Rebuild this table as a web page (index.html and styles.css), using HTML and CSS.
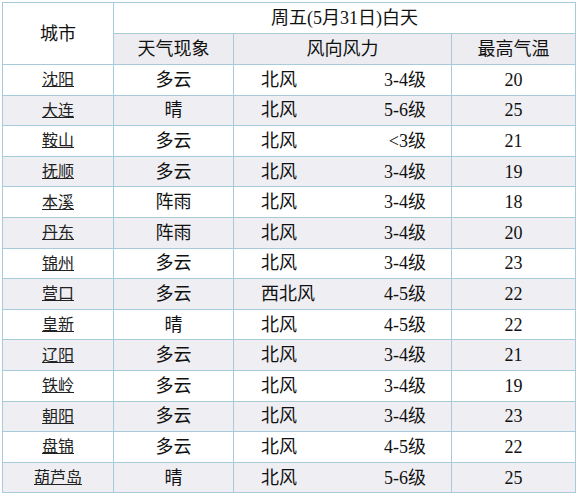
FILE: index.html
```html
<!DOCTYPE html>
<html>
<head>
<meta charset="utf-8">
<link rel="stylesheet" href="styles.css">
</head>
<body>
<table class="wx">
  <colgroup>
    <col class="c1"><col class="c2"><col class="c3"><col class="c4">
  </colgroup>
  <thead>
    <tr class="h1">
      <th rowspan="2" class="city-h">城市</th>
      <th colspan="3">周五(5月31日)白天</th>
    </tr>
    <tr class="h2">
      <th>天气现象</th>
      <th>风向风力</th>
      <th>最高气温</th>
    </tr>
  </thead>
  <tbody>
    <tr><td><a href="#">沈阳</a></td><td>多云</td><td><div class="wind"><span>北风</span><span>3-4级</span></div></td><td>20</td></tr>
    <tr><td><a href="#">大连</a></td><td>晴</td><td><div class="wind"><span>北风</span><span>5-6级</span></div></td><td>25</td></tr>
    <tr><td><a href="#">鞍山</a></td><td>多云</td><td><div class="wind"><span>北风</span><span>&lt;3级</span></div></td><td>21</td></tr>
    <tr><td><a href="#">抚顺</a></td><td>多云</td><td><div class="wind"><span>北风</span><span>3-4级</span></div></td><td>19</td></tr>
    <tr><td><a href="#">本溪</a></td><td>阵雨</td><td><div class="wind"><span>北风</span><span>3-4级</span></div></td><td>18</td></tr>
    <tr><td><a href="#">丹东</a></td><td>阵雨</td><td><div class="wind"><span>北风</span><span>3-4级</span></div></td><td>20</td></tr>
    <tr><td><a href="#">锦州</a></td><td>多云</td><td><div class="wind"><span>北风</span><span>3-4级</span></div></td><td>23</td></tr>
    <tr><td><a href="#">营口</a></td><td>多云</td><td><div class="wind"><span>西北风</span><span>4-5级</span></div></td><td>22</td></tr>
    <tr><td><a href="#">皇新</a></td><td>晴</td><td><div class="wind"><span>北风</span><span>4-5级</span></div></td><td>22</td></tr>
    <tr><td><a href="#">辽阳</a></td><td>多云</td><td><div class="wind"><span>北风</span><span>3-4级</span></div></td><td>21</td></tr>
    <tr><td><a href="#">铁岭</a></td><td>多云</td><td><div class="wind"><span>北风</span><span>3-4级</span></div></td><td>19</td></tr>
    <tr><td><a href="#">朝阳</a></td><td>多云</td><td><div class="wind"><span>北风</span><span>3-4级</span></div></td><td>23</td></tr>
    <tr><td><a href="#">盘锦</a></td><td>多云</td><td><div class="wind"><span>北风</span><span>4-5级</span></div></td><td>22</td></tr>
    <tr><td><a href="#">葫芦岛</a></td><td>晴</td><td><div class="wind"><span>北风</span><span>5-6级</span></div></td><td>25</td></tr>
  </tbody>
</table>
</body>
</html>
```
FILE: styles.css
```css
html, body {
  margin: 0;
  padding: 0;
  background: #ffffff;
}
body {
  padding: 2px 0 0 2px;
  font-family: "Liberation Serif", "Noto Sans CJK SC", serif;
  color: #111111;
}
.wx {
  border-collapse: collapse;
  table-layout: fixed;
  width: 573px;
  border: 1px solid #9fc6d8;
}
.c1 { width: 111px; }
.c2 { width: 120px; }
.c3 { width: 218px; }
.c4 { width: 124px; }
.wx th, .wx td {
  border: 1px solid #a8cbdc;
  text-align: center;
  padding: 0;
  font-weight: normal;
  font-size: 18px;
  line-height: 20px;
}
.h1 th {
  height: 30px;
  background: #ffffff;
}
.h2 th {
  height: 30px;
  background: #ededf1;
}
.wx tbody td {
  height: 29.6px;
}
.wx tbody tr:nth-child(even) td {
  background: #efeff3;
}
.wx tbody td a {
  color: #222222;
  text-decoration: underline;
  font-size: 16px;
}
.wind {
  display: flex;
  justify-content: space-between;
  padding: 0 25px 0 27px;
}
```
